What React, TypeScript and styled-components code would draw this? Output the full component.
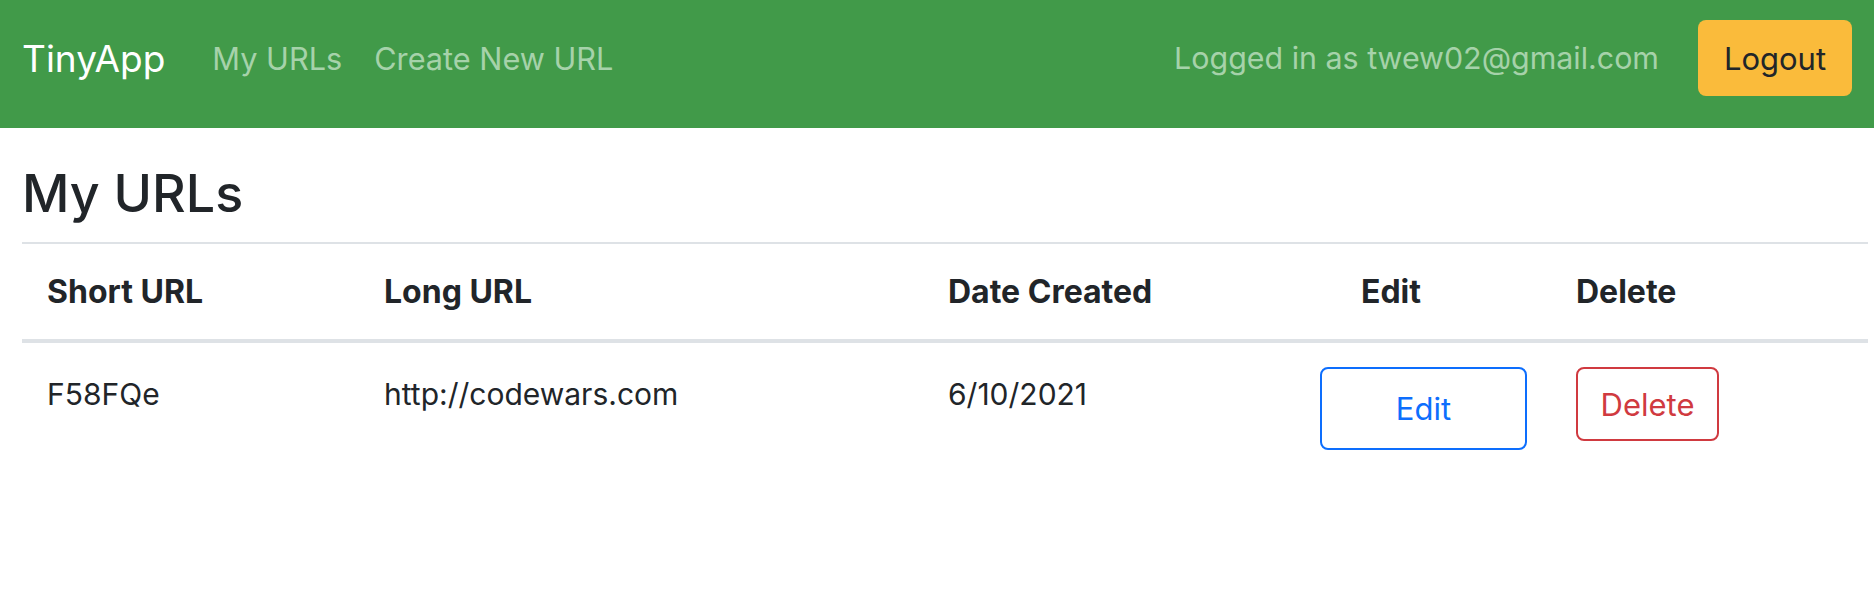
import React from "react";
import styled, { createGlobalStyle } from "styled-components";

const GlobalStyle = createGlobalStyle`
  * { box-sizing: border-box; }
  body {
    margin: 0;
    background: #fff;
    color: #212529;
    font-family: Inter, "Noto Sans", sans-serif;
  }
`;

const Navbar = styled.nav`
  height: 128px;
  background-color: #419a49;
  padding: 20px 22px 32px 22px;
  display: flex;
  align-items: center;
`;

const Brand = styled.a`
  font-size: 37px;
  color: #fff;
  text-decoration: none;
  margin-right: 31px;
`;

const NavLink = styled.a`
  font-size: 30.7px;
  color: #a6d2aa;
  text-decoration: none;
  padding: 0 16px;
`;

const Spacer = styled.div`
  flex: 1;
`;

const LoggedIn = styled.span`
  font-size: 30.4px;
  color: #a6d2aa;
  margin-right: 39px;
`;

const LogoutButton = styled.button`
  width: 154px;
  height: 76px;
  border: none;
  border-radius: 8px;
  background-color: #fabb3b;
  color: #212529;
  font-family: inherit;
  font-size: 31px;
`;

const Main = styled.main`
  padding: 35px 6px 0 22px;
`;

const Title = styled.h1`
  margin: 0;
  font-size: 52px;
  font-weight: 500;
  line-height: 62px;
  padding-bottom: 17px;
  border-bottom: 2px solid #dee2e6;
`;

const Table = styled.table`
  width: 100%;
  border-collapse: collapse;
  table-layout: fixed;
`;

const HeadCell = styled.th<{ $indent?: number }>`
  text-align: left;
  font-size: 32px;
  font-weight: 700;
  height: 97px;
  vertical-align: middle;
  padding: 0 0 0 ${(p) => 25 + (p.$indent ?? 0)}px;
  border-bottom: 4px solid #dee2e6;
`;

const Cell = styled.td<{ $top?: number }>`
  vertical-align: top;
  font-size: 30px;
  line-height: 36px;
  padding: ${(p) => p.$top ?? 24}px 0 24px 25px;
`;

const OutlineButton = styled.button<{ $color: string; $w: number; $h: number }>`
  width: ${(p) => p.$w}px;
  height: ${(p) => p.$h}px;
  border: 2px solid ${(p) => p.$color};
  border-radius: 8px;
  background: #fff;
  color: ${(p) => p.$color};
  font-family: inherit;
  font-size: 31px;
  padding: 0;
`;

const urls = [{ short: "F58FQe", long: "http://codewars.com", date: "6/10/2021" }];

export default function App() {
  return (
    <>
      <GlobalStyle />
      <Navbar>
        <Brand href="#">TinyApp</Brand>
        <NavLink href="#">My URLs</NavLink>
        <NavLink href="#">Create New URL</NavLink>
        <Spacer />
        <LoggedIn>Logged in as twew02@gmail.com</LoggedIn>
        <LogoutButton>Logout</LogoutButton>
      </Navbar>
      <Main>
        <Title>My URLs</Title>
        <Table>
          <colgroup>
            <col style={{ width: 337 }} />
            <col style={{ width: 564 }} />
            <col style={{ width: 372 }} />
            <col style={{ width: 256 }} />
            <col />
          </colgroup>
          <thead>
            <tr>
              <HeadCell>Short URL</HeadCell>
              <HeadCell>Long URL</HeadCell>
              <HeadCell>Date Created</HeadCell>
              <HeadCell $indent={41}>Edit</HeadCell>
              <HeadCell>Delete</HeadCell>
            </tr>
          </thead>
          <tbody>
            {urls.map((u) => (
              <tr key={u.short}>
                <Cell $top={33}>{u.short}</Cell>
                <Cell $top={33}>{u.long}</Cell>
                <Cell $top={33}>{u.date}</Cell>
                <Cell>
                  <OutlineButton $color="#0d6efd" $w={207} $h={83}>
                    Edit
                  </OutlineButton>
                </Cell>
                <Cell>
                  <OutlineButton $color="#d03a40" $w={143} $h={74}>
                    Delete
                  </OutlineButton>
                </Cell>
              </tr>
            ))}
          </tbody>
        </Table>
      </Main>
    </>
  );
}
